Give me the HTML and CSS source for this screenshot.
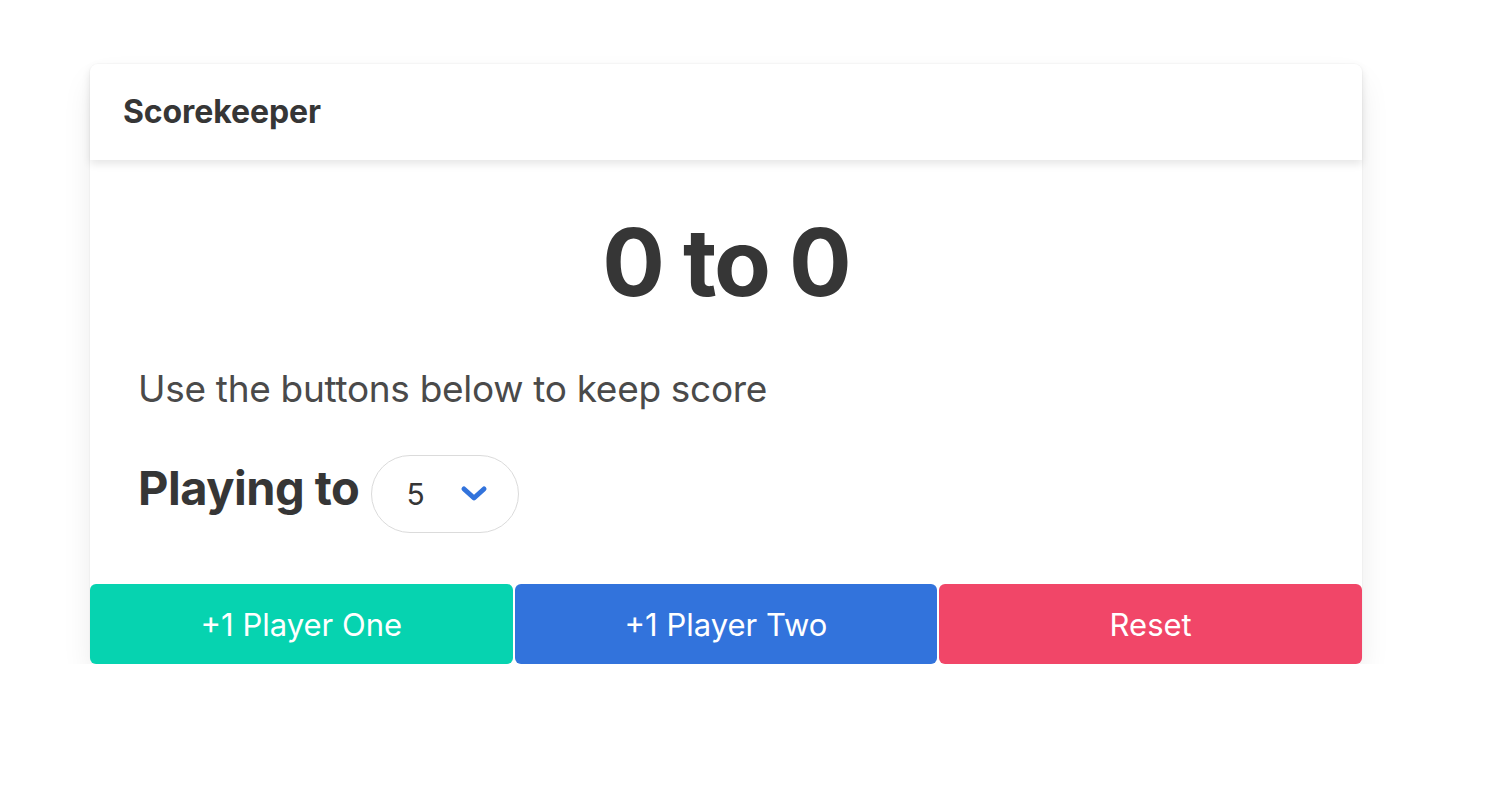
FILE: index.html
```html
<!DOCTYPE html>
<html lang="en">
<head>
<meta charset="utf-8">
<title>Scorekeeper</title>
<link rel="stylesheet" href="styles.css">
</head>
<body>
<div class="page">
  <div class="card">
    <header class="card-header">
      <p class="card-header-title">Scorekeeper</p>
    </header>
    <div class="card-content">
      <h1 class="score">0 to 0</h1>
      <p class="subtitle">Use the buttons below to keep score</p>
      <div class="playing">
        <label class="playing-label" for="playto">Playing to</label>
        <div class="select">
          <span class="select-value">5</span>
          <svg class="chevron" width="28" height="18" viewBox="0 0 28 18" aria-hidden="true">
            <polyline points="4,4 14,13 24,4" fill="none" stroke="#3273dc" stroke-width="5" stroke-linecap="round" stroke-linejoin="round"/>
          </svg>
        </div>
      </div>
    </div>
    <footer class="card-footer">
      <button class="btn btn-primary">+1 Player One</button>
      <button class="btn btn-link">+1 Player Two</button>
      <button class="btn btn-danger">Reset</button>
    </footer>
  </div>
</div>
</body>
</html>
```

FILE: styles.css
```css
html, body {
  margin: 0;
  padding: 0;
  background: #ffffff;
}
body {
  font-family: Inter, "Noto Sans", "Liberation Sans", sans-serif;
  color: #4a4a4a;
}
.page {
  padding: 64px 0 0 90px;
}
.card {
  width: 1272px;
  background: #ffffff;
  border-radius: 8px;
  box-shadow: 0 16px 32px -4px rgba(10, 10, 10, 0.1), 0 0 0 1px rgba(10, 10, 10, 0.02);
}
.card-header {
  display: flex;
  border-radius: 8px 8px 0 0;
  box-shadow: 0 4px 8px rgba(10, 10, 10, 0.1);
  position: relative;
  z-index: 1;
}
.card-header-title {
  margin: 0;
  padding: 24px 32px 24px 33px;
  font-size: 32px;
  line-height: 48px;
  font-weight: 700;
  color: #363636;
  letter-spacing: -0.1px;
}
.card-content {
  padding: 48px 48px 51px 48px;
}
.score {
  margin: 0 0 48px 0;
  text-align: center;
  font-size: 93px;
  line-height: 108px;
  font-weight: 700;
  color: #363636;
  letter-spacing: -2px;
}
.subtitle {
  margin: 0;
  font-size: 37px;
  line-height: 50px;
  font-weight: 400;
  color: #4a4a4a;
  letter-spacing: -0.3px;
}
.playing {
  display: flex;
  align-items: baseline;
  gap: 12px;
  margin-top: 41px;
}
.playing-label {
  font-size: 47px;
  line-height: 54px;
  font-weight: 700;
  color: #363636;
  letter-spacing: -0.5px;
}
.select {
  display: flex;
  align-items: baseline;
  box-sizing: border-box;
  height: 78px;
  width: 148px;
  padding: 14px 0 14px 34px;
  border: 1px solid #dbdbdb;
  border-radius: 9999px;
  font-size: 30px;
  line-height: 48px;
  color: #363636;
  position: relative;
}
.chevron {
  position: absolute;
  right: 30px;
  top: 29px;
}
.card-footer {
  display: flex;
  gap: 2px;
}
.btn {
  flex: 1;
  height: 80px;
  border: none;
  border-radius: 6px;
  color: #ffffff;
  font-family: Inter, "Noto Sans", "Liberation Sans", sans-serif;
  font-size: 31px;
  font-weight: 400;
  padding: 0;
  cursor: pointer;
}
.btn-primary {
  background: #06d3b0;
}
.btn-link {
  background: #3273dc;
}
.btn-danger {
  background: #f14668;
}
```
